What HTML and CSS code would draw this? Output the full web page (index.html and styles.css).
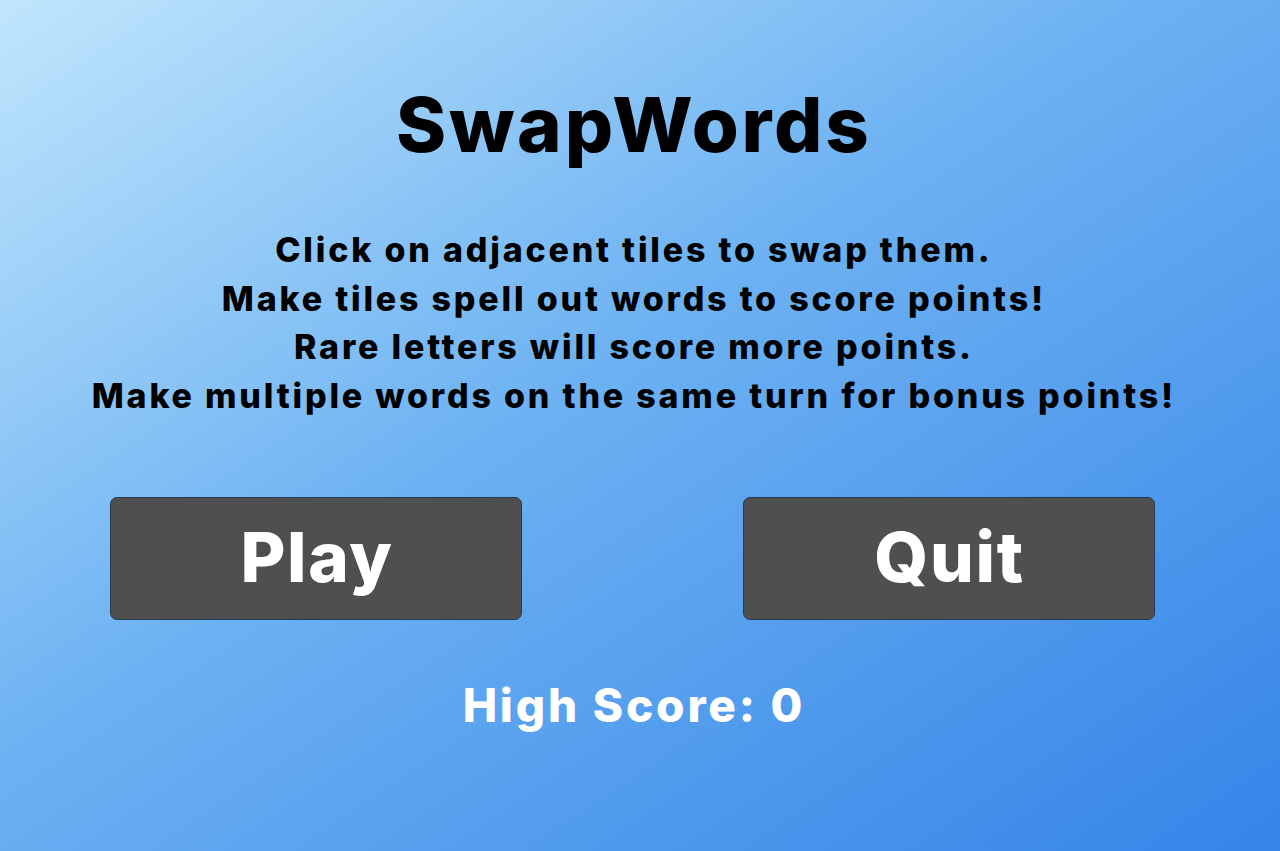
FILE: index.html
```html
<!DOCTYPE html>
<html lang="en">
<head>
<meta charset="utf-8">
<title>SwapWords</title>
<link rel="stylesheet" href="styles.css">
</head>
<body>
<main class="screen">
  <h1 class="title">SwapWords</h1>
  <div class="instructions">
    <p>Click on adjacent tiles to swap them.</p>
    <p>Make tiles spell out words to score points!</p>
    <p>Rare letters will score more points.</p>
    <p>Make multiple words on the same turn for bonus points!</p>
  </div>
  <div class="buttons">
    <div class="slot"><button class="btn">Play</button></div>
    <div class="slot"><button class="btn">Quit</button></div>
  </div>
  <div class="score">High Score: 0</div>
</main>
</body>
</html>
```
FILE: styles.css
```css
html, body {
  margin: 0;
  padding: 0;
  height: 100%;
}
body {
  background: linear-gradient(to bottom right, #c0e6fc 0%, #6cb1f2 45%, #3584e8 100%);
  font-family: Inter, "Noto Sans", sans-serif;
  overflow: hidden;
}
.screen {
  width: 1265px;
  display: flex;
  flex-direction: column;
  align-items: center;
}
.title {
  margin: 80px 0 0 0;
  padding-left: 2.8px;
  font-size: 76px;
  line-height: 88px;
  letter-spacing: 2.8px;
  font-weight: 800;
  color: #000;
}
.instructions {
  margin-top: 58px;
  text-align: center;
}
.instructions p {
  margin: 0;
  padding-left: 2.8px;
  font-size: 34px;
  line-height: 48.5px;
  letter-spacing: 2.8px;
  font-weight: 800;
  color: #000;
}
.buttons {
  margin-top: 77px;
  width: 100%;
  display: flex;
}
.slot {
  flex: 1;
  display: flex;
  justify-content: center;
}
.btn {
  width: 412px;
  height: 123px;
  background: #4f4f4f;
  border: 1.5px solid #263a50;
  border-radius: 7px;
  color: #fff;
  font-family: Inter, "Noto Sans", sans-serif;
  font-size: 69px;
  letter-spacing: 1.7px;
  padding: 0 0 4px 1.7px;
  font-weight: 800;
}
.score {
  margin-top: 55px;
  padding-left: 2.8px;
  font-size: 46px;
  line-height: 60px;
  letter-spacing: 2.8px;
  font-weight: 800;
  color: #fff;
}
```
